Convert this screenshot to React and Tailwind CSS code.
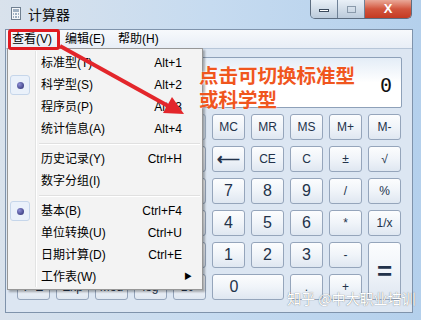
import React from 'react';

const ui = "font-['Liberation_Sans','Noto_Sans_CJK_SC',sans-serif]";

// scientific block on the left, standard block on the right; one 10-column grid
const keys = [
  { k: 'rad', span: 'col-span-5' }, 'MC', 'MR', 'MS', 'M+', 'M-',
  { k: 'blank' }, 'Inv', 'ln', '(', ')', '⟵', 'CE', 'C', '±', '√',
  'Int', 'sinh', 'sin', 'x²', 'n!', '7', '8', '9', '/', '%',
  'dms', 'cosh', 'cos', 'xʸ', 'ʸ√x', '4', '5', '6', '*', '1/x',
  'π', 'tanh', 'tan', 'x³', '∛x', '1', '2', '3', '-', { k: '=', span: 'row-span-2' },
  'F-E', 'Exp', 'Mod', 'log', '10ˣ', { k: '0', span: 'col-span-2' }, '.', '+',
];

function Key({ label, span = '' }) {
  const digit = /^[0-9]$/.test(label);
  const big = label === '=';
  const arrow = label === '⟵';
  return (
    <div
      className={`${span} flex items-center justify-center rounded-[3px] border border-[#95a5bb] bg-linear-to-b from-[#fcfdfe] via-[#f0f4f9] to-[#dfe7f1] text-[#22324a] ${
        big ? 'text-[26px] font-bold' : digit ? 'text-[16px]' : arrow ? 'text-[16px] font-bold' : 'text-[12px]'
      } ${label === '0' ? 'pr-[28px]' : ''}`}
    >
      {label}
    </div>
  );
}

const menu = [
  { t: '标准型(T)', s: 'Alt+1' },
  { t: '科学型(S)', s: 'Alt+2', on: true },
  { t: '程序员(P)', s: 'Alt+3' },
  { t: '统计信息(A)', s: 'Alt+4' },
  'sep',
  { t: '历史记录(Y)', s: 'Ctrl+H' },
  { t: '数字分组(I)', s: '' },
  'sep',
  { t: '基本(B)', s: 'Ctrl+F4', on: true },
  { t: '单位转换(U)', s: 'Ctrl+U' },
  { t: '日期计算(D)', s: 'Ctrl+E' },
  { t: '工作表(W)', s: '', sub: true },
];

export default function App() {
  return (
    <div className={`${ui} relative flex h-[320px] w-[421px] flex-col overflow-hidden bg-linear-to-r from-[#d9e2ec] via-[#c6dbf0] to-[#b4d0ec] text-black`}>
      {/* title bar */}
      <div className="flex h-[29px] shrink-0 items-start">
        <div className="mt-[7px] ml-[11px] flex h-[13px] w-[10px] flex-col gap-[1px] border border-[#6f7f90] bg-[#f4f6f8] p-[1px]">
          <div className="h-[3px] bg-[#9fb0c2]" />
          <div className="grid flex-1 grid-cols-3 gap-[1px]">
            {Array.from({ length: 6 }).map((_, i) => (
              <div key={i} className="bg-[#9fb0c2]" />
            ))}
          </div>
        </div>
        <span className="mt-[5px] ml-[7px] text-[14px] text-[#111]">计算器</span>
        <div className="ml-auto mr-[9px] flex h-[19px] overflow-hidden rounded-b-[5px] border border-t-0 border-[#5d6d80]">
          <div className="flex w-[27px] items-center justify-center border-r border-[#6f8196] bg-linear-to-b from-[#e9f0f7] to-[#bccbdb]">
            <div className="mt-[3px] h-[3px] w-[10px] border border-[#3b4a5c] bg-white" />
          </div>
          <div className="flex w-[27px] items-center justify-center border-r border-[#6f8196] bg-linear-to-b from-[#e9f0f7] to-[#bccbdb]">
            <div className="h-[7px] w-[9px] border border-[#8a9aab]" />
          </div>
          <div className="flex w-[46px] items-center justify-center bg-linear-to-b from-[#e9a898] via-[#d2553d] to-[#c43a22] text-[13px] font-bold text-white">
            X
          </div>
        </div>
      </div>

      {/* client */}
      <div className="ml-[5px] mr-[8px] flex flex-1 flex-col border border-[#7f93ab] bg-[#dce6f2]">
        <div className="flex h-[19px] items-center gap-[13px] border-b border-[#b7c6d8] bg-linear-to-b from-[#f7f9fc] to-[#e8eef6] pl-[6px] text-[12px]">
          <span>查看(V)</span>
          <span>编辑(E)</span>
          <span>帮助(H)</span>
        </div>
        <div className="flex flex-col gap-[6px] pt-[8px] pl-[11px]">
          <div className="relative h-[51px] w-[385px] rounded-[2px] border border-[#8ea1b9] bg-linear-to-b from-[#e4edf7] via-white to-white">
            <span className="absolute right-[9px] bottom-[7px] font-['DejaVu_Sans_Mono',monospace] text-[20px] text-[#111]">0</span>
          </div>
          <div className="grid grid-cols-[repeat(10,33px)] grid-rows-[repeat(6,26px)] gap-[6px]">
            {keys.map((x, i) => {
              if (typeof x === 'string') return <Key key={i} label={x} />;
              if (x.k === 'blank') return <div key={i} />;
              if (x.k === 'rad')
                return (
                  <div key={i} className={`${x.span} flex items-center gap-[10px] rounded-[3px] border border-[#a5b5c9] px-[6px] text-[11px]`}>
                    <span>◉ 度</span>
                    <span>○ 弧度</span>
                    <span>○ 梯度</span>
                  </div>
                );
              return <Key key={i} label={x.k} span={x.span} />;
            })}
          </div>
        </div>
      </div>
      <div className="h-[7px] shrink-0" />

      {/* open 查看 menu */}
      <div className="absolute top-[48px] left-[7px] flex h-[242px] w-[196px] flex-col border border-[#979797] bg-[#f3f3f3] pt-[3px] text-[12px] shadow-[2px_2px_2px_rgba(0,0,0,0.3)]">
        <div className="absolute top-[2px] bottom-[2px] left-[27px] w-[2px] border-l border-[#e2e3e3] bg-white" />
        {menu.map((m, i) =>
          m === 'sep' ? (
            <div key={i} className="flex h-[8px] items-center pl-[31px] pr-[2px]">
              <div className="h-[2px] w-full border-t border-[#e0e0e0] bg-white" />
            </div>
          ) : (
            <div key={i} className="relative flex h-[22px] items-center pl-[33px] pr-[20px]">
              {m.on && (
                <div className="absolute left-[2px] top-[1px] flex h-[20px] w-[20px] items-center justify-center rounded-[3px] border border-[#c6d6ea] bg-[#eaf1fa]">
                  <div className="h-[7px] w-[7px] rounded-full bg-[radial-gradient(circle_at_35%_35%,#8e8fd6,#26296b)]" />
                </div>
              )}
              <span>{m.t}</span>
              <span className="ml-auto">{m.s}</span>
              {m.sub && <span className="absolute right-[10px] text-[8px]">▶</span>}
            </div>
          )
        )}
      </div>

      {/* red highlight box on 查看 */}
      <div className="absolute top-[29px] left-[8px] h-[21px] w-[52px] rounded-[3px] border-[3px] border-[#e01b22]" />

      {/* arrow */}
      <svg className="pointer-events-none absolute inset-0" width="421" height="320">
        <line x1="60" y1="46" x2="170" y2="107" stroke="#e3262b" strokeWidth="4" />
        <polygon points="184,114 172,97 163,113" fill="#e3262b" />
      </svg>

      {/* annotation */}
      <div className="absolute top-[63px] left-[199px] font-['Noto_Sans_CJK_SC',sans-serif] text-[19.5px] leading-[24px] font-bold text-[#f0561e] [text-shadow:0_0_2px_#fff]">
        <div>点击可切换标准型</div>
        <div>或科学型</div>
      </div>

      {/* watermark */}
      <div className="absolute top-[288px] left-[287px] font-['Noto_Sans_CJK_SC',sans-serif] text-[14px] text-white [text-shadow:0_0_1px_rgba(60,60,60,0.8)]">
        知乎 @中大职业培训
      </div>
    </div>
  );
}
